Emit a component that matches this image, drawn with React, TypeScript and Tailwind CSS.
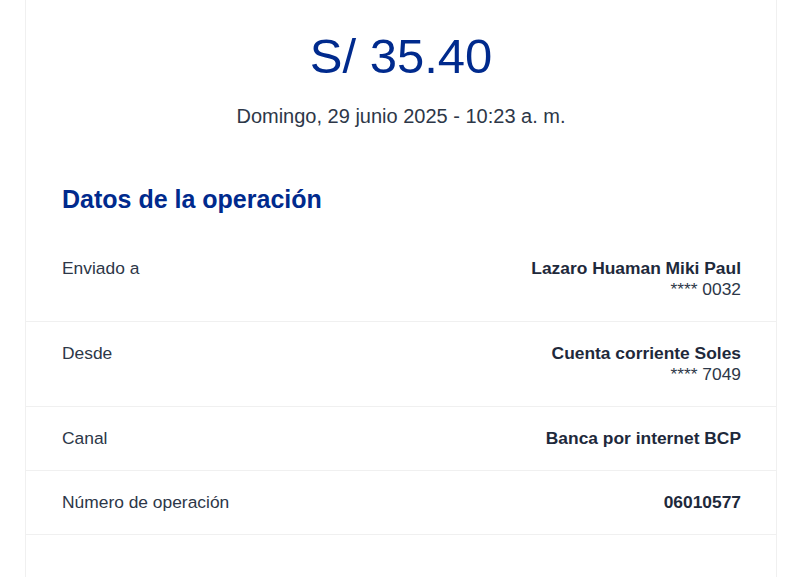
const rows = [
  { label: 'Enviado a', value: 'Lazaro Huaman Miki Paul', sub: '**** 0032' },
  { label: 'Desde', value: 'Cuenta corriente Soles', sub: '**** 7049' },
  { label: 'Canal', value: 'Banca por internet BCP' },
  { label: 'Número de operación', value: '06010577' },
];

export default function App() {
  return (
    <div className="min-h-screen bg-white font-['Liberation_Sans',Arial,sans-serif]">
      <div className="ml-[25px] w-[752px] min-h-[577px] border-x border-[#f0f0f0] pt-[32px]">
        {/* monto */}
        <div className="text-center text-[49px] leading-[48px] text-[#002a8d]">S/ 35.40</div>
        <div className="mt-[22px] text-center text-[20px] leading-[28px] text-[#2d3748]">
          Domingo, 29 junio 2025 - 10:23 a. m.
        </div>

        <h2 className="mt-[53px] px-9 text-[25px] leading-[32px] font-bold text-[#002a8d]">
          Datos de la operación
        </h2>

        <div className="mt-[22px]">
          {rows.map((r) => (
            <div
              key={r.label}
              className="flex justify-between border-b border-[#f0f0f0] pl-9 pr-[35px] py-[21px] text-[17.4px] leading-[21px] text-[#2d3748]"
            >
              <span>{r.label}</span>
              <div className="text-right">
                <div className="font-bold text-[#1e293b]">{r.value}</div>
                {r.sub && <div>{r.sub}</div>}
              </div>
            </div>
          ))}
        </div>
      </div>
    </div>
  );
}
